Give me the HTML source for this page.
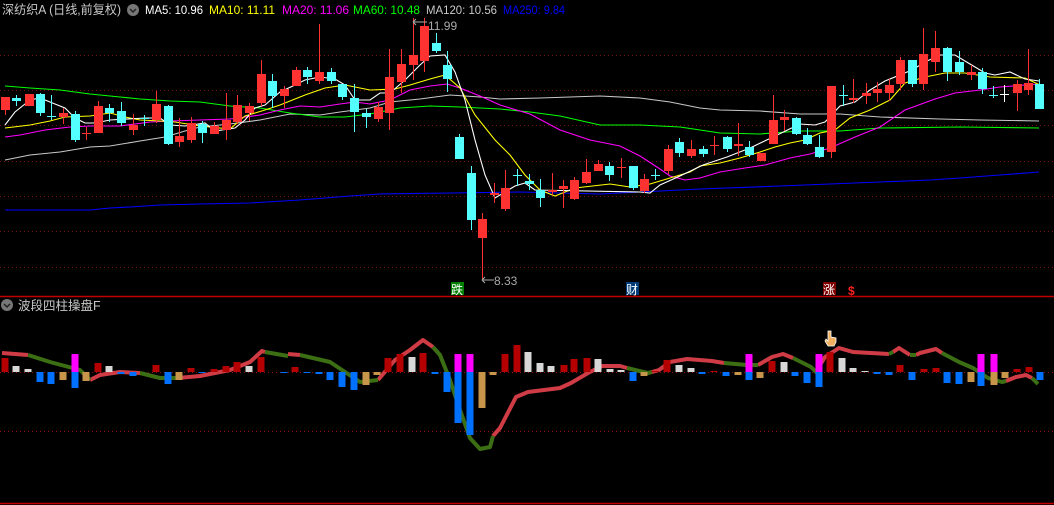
<!DOCTYPE html>
<html><head><meta charset="utf-8">
<style>
html,body{margin:0;padding:0;background:#000;width:1054px;height:505px;overflow:hidden}
svg{display:block}
text{font-family:"Liberation Sans","Noto Sans CJK SC",sans-serif}
</style></head><body>
<svg id="s" width="1054" height="505" viewBox="0 0 1054 505" xmlns="http://www.w3.org/2000/svg">
<rect width="1054" height="505" fill="#000"/>
<g id="grid"></g>
<g id="ma" fill="none" stroke-width="1.1"></g>
<g id="cd"></g>
<g id="band" fill="none" stroke-width="4" stroke-linejoin="round"></g>
<g id="bars"></g>
<line x1="0" y1="296.5" x2="1054" y2="296.5" stroke="#c00000" stroke-width="1.5"/>
<line x1="0" y1="503.5" x2="1054" y2="503.5" stroke="#c00000" stroke-width="1.5"/>
<text x="2" y="14" font-size="12.5" fill="#c8c8c8" textLength="119" lengthAdjust="spacingAndGlyphs">深纺织A (日线,前复权)</text>
<circle cx="133" cy="10" r="6" fill="#777"/><path d="M130 9 l3 3 l3 -3" stroke="#222" stroke-width="1.5" fill="none"/>
<text x="145" y="14" font-size="12" fill="#fff" textLength="58" lengthAdjust="spacingAndGlyphs">MA5: 10.96</text>
<text x="209" y="14" font-size="12" fill="#ffff00" textLength="66" lengthAdjust="spacingAndGlyphs">MA10: 11.11</text>
<text x="282" y="14" font-size="12" fill="#ff00ff" textLength="67" lengthAdjust="spacingAndGlyphs">MA20: 11.06</text>
<text x="353" y="14" font-size="12" fill="#00ff00" textLength="67" lengthAdjust="spacingAndGlyphs">MA60: 10.48</text>
<text x="426" y="14" font-size="12" fill="#c8c8c8" textLength="71" lengthAdjust="spacingAndGlyphs">MA120: 10.56</text>
<text x="503" y="14" font-size="12" fill="#0000ff" textLength="62" lengthAdjust="spacingAndGlyphs">MA250: 9.84</text>
<path d="M413 22 h14 M413 22 l3 -3 M413 22 l3 3" stroke="#aaa" fill="none"/>
<text x="428" y="30" font-size="12" fill="#aaa">11.99</text>
<path d="M482 280 h12 M482 280 l3 -3 M482 280 l3 3" stroke="#aaa" fill="none"/>
<text x="494" y="285" font-size="12" fill="#aaa">8.33</text>
<rect x="451" y="282" width="13" height="13" fill="#008000"/><text x="451" y="294" font-size="12" fill="#fff">跌</text>
<rect x="626" y="282" width="13" height="13" fill="#003c78"/><text x="626" y="294" font-size="12" fill="#fff">财</text>
<rect x="823" y="282" width="13" height="13" fill="#800000"/><text x="823" y="294" font-size="12" fill="#fff">涨</text>
<text x="848" y="295" font-size="12" fill="#ff2020" font-weight="bold">$</text>
<circle cx="7" cy="305" r="6" fill="#777"/><path d="M4 304 l3 3 l3 -3" stroke="#222" stroke-width="1.5" fill="none"/>
<text x="18" y="310" font-size="12.5" fill="#c8c8c8">波段四柱操盘F</text>
<path d="M828 331 v10 l-2 -2 l-1 2 l3 5 h6 l2 -4 v-4 l-5 -1 v-6 z" fill="#f0b060" stroke="#fff" stroke-width="0.8"/>
</svg>
<script>
var NS="http://www.w3.org/2000/svg";
function el(p,t,a){var e=document.createElementNS(NS,t);for(var k in a)e.setAttribute(k,a[k]);document.getElementById(p).appendChild(e);return e;}
[55,90,125,161,196,231,267].forEach(function(y){el("grid","line",{x1:0,x2:1054,y1:y+.5,y2:y+.5,stroke:"#7a1010","stroke-dasharray":"1 3"});});
[372,431].forEach(function(y){el("grid","line",{x1:0,x2:1054,y1:y+.5,y2:y+.5,stroke:"#901010","stroke-dasharray":"1 3"});});
function pl(id,c,pts){el(id,"polyline",{points:pts.map(function(p){return p.join(",")}).join(" "),stroke:c});}
pl("ma","#0000ff",[[5,210],[90,210],[110,208],[130,207],[160,205],[200,204],[250,203],[300,200],[350,196],[380,194],[450,193],[520,192],[560,193],[600,194],[640,192],[700,189],[780,186],[830,184],[880,182],[930,180],[960,178],[1000,175],[1039,172]]);
pl("ma","#c8c8c8",[[5,160],[30,155],[60,152],[90,147],[110,146],[140,141],[165,137],[185,131],[200,127],[230,124],[260,120],[290,114],[320,115],[340,112],[370,108],[390,102],[420,99],[450,95],[480,97],[500,99],[540,98],[600,96],[640,98],[670,102],[700,108],[720,110],[760,111],[800,114],[840,114],[880,117],[940,119],[980,120],[1039,121]]);
pl("ma","#00ff00",[[5,86],[30,88],[60,90],[90,94],[120,97],[140,99],[170,101],[200,102],[230,106],[260,108],[290,113],[320,117],[345,117],[370,114],[400,108],[430,106],[460,107],[500,109],[530,112],[560,116],[600,125],[640,125],[680,127],[720,133],[760,134],[800,131],[840,131],[880,128],[960,127],[1039,128]]);
pl("ma","#ff00ff",[[5,137],[20,135],[45,130],[70,127],[90,126],[120,126],[150,122],[170,121],[200,120],[230,119],[260,115],[280,110],[300,106],[320,107],[340,104],[355,102],[370,104],[390,100],[410,90],[430,86],[447,84],[460,88],[480,96],[500,105],[530,114],[560,130],[590,140],[620,146],[640,156],[660,169],[670,176],[685,180],[700,178],[720,172],[745,168],[765,165],[790,158],[810,154],[830,148],[855,137],[880,127],[905,110],[935,99],[955,93],[980,90],[1000,87],[1038,84]]);
pl("ma","#ffff00",[[5,128],[30,125],[50,121],[65,117],[90,116],[110,113],[125,117],[140,120],[160,121],[175,122],[200,126],[230,129],[245,116],[255,113],[265,110],[280,105],[290,101],[305,95],[325,88],[345,85],[370,90],[395,89],[410,85],[430,79],[445,75],[460,88],[475,115],[495,140],[510,155],[525,175],[540,190],[555,196],[575,188],[610,184],[630,187],[650,184],[670,178],[690,172],[700,166],[720,163],[740,158],[760,152],[775,147],[790,143],[805,140],[820,133],[835,130],[850,118],[870,110],[890,100],[905,83],[925,77],[945,73],[965,73],[990,77],[1025,78],[1040,85]]);
pl("ma","#ffffff",[[5,125],[15,112],[30,100],[40,98],[55,104],[65,108],[75,118],[85,123],[95,123],[110,120],[145,118],[160,118],[170,125],[185,126],[205,123],[215,131],[235,128],[245,120],[255,108],[265,105],[280,92],[295,85],[305,80],[320,77],[335,79],[345,85],[355,100],[370,100],[380,93],[390,93],[405,80],[420,65],[430,56],[445,55],[455,72],[465,100],[475,140],[485,175],[495,198],[505,192],[515,186],[525,183],[535,190],[640,192],[650,193],[660,185],[680,176],[703,165],[727,157],[750,148],[773,137],[800,124],[815,125],[825,122],[840,106],[855,102],[870,90],[885,81],[912,70],[925,62],[940,55],[955,55],[970,64],[985,73],[995,75],[1010,72],[1025,79],[1039,81]]);
var C=[[5,97,110,97,115,"r"],[16,98,101,95,106,"c"],[29,94,106,94,106,"r"],[40,94,113,93,116,"c"],[51,116,117,95,120,"c"],[63,113,117,108,124,"r"],[75,114,140,111,142,"c"],[86,133,134,127,140,"r"],[98,106,133,101,133,"r"],[109,108,113,104,122,"c"],[121,111,123,102,126,"c"],[133,125,130,114,135,"r"],[144,118,119,115,126,"c"],[156,104,120,91,123,"r"],[168,106,144,105,145,"c"],[179,136,142,118,147,"r"],[191,123,140,117,143,"r"],[202,124,133,121,143,"c"],[214,126,134,122,134,"r"],[226,120,130,93,140,"r"],[237,105,122,95,124,"r"],[249,106,113,103,121,"r"],[261,74,103,60,106,"r"],[272,81,96,74,108,"c"],[284,89,96,86,108,"r"],[296,70,86,67,86,"r"],[307,70,77,67,84,"c"],[319,72,81,24,84,"r"],[331,72,81,68,84,"c"],[342,84,97,84,100,"c"],[354,98,112,84,132,"c"],[366,113,117,109,128,"c"],[378,107,119,102,122,"r"],[389,77,113,49,130,"r"],[401,64,82,49,93,"r"],[413,55,65,18,80,"r"],[424,26,61,18,72,"r"],[436,43,51,33,53,"c"],[447,65,79,51,92,"c"],[459,137,159,134,159,"c"],[471,173,220,166,230,"c"],[482,219,238,213,279,"r"],[494,193,195,183,203,"r"],[505,188,209,170,211,"r"],[517,175,176,169,186,"c"],[529,181,184,174,190,"c"],[540,190,198,179,207,"c"],[552,190,192,173,195,"r"],[563,186,189,180,208,"r"],[574,180,199,177,200,"r"],[586,172,183,159,184,"r"],[598,164,171,160,171,"r"],[609,166,175,162,181,"c"],[621,167,168,158,178,"r"],[633,166,188,166,190,"c"],[644,179,191,174,193,"r"],[655,175,176,169,180,"c"],[668,149,171,145,174,"r"],[679,142,153,138,157,"c"],[691,149,156,140,158,"r"],[703,149,154,146,157,"c"],[714,145,146,136,155,"r"],[727,137,149,136,152,"c"],[738,144,146,123,156,"r"],[749,147,155,141,157,"c"],[761,153,161,153,161,"r"],[773,120,144,95,144,"r"],[784,117,120,110,131,"r"],[796,118,134,117,135,"c"],[807,135,144,128,145,"c"],[819,147,157,135,158,"c"],[831,86,152,86,158,"r"],[843,95,96,85,106,"c"],[853,98,100,79,103,"r"],[866,93,96,83,104,"r"],[877,89,93,82,102,"r"],[889,85,93,79,101,"r"],[900,60,84,57,90,"r"],[912,60,84,60,87,"c"],[923,54,84,28,90,"r"],[935,48,62,31,72,"r"],[947,48,72,47,81,"c"],[959,62,72,51,75,"c"],[971,72,75,65,80,"r"],[982,72,89,68,94,"c"],[993,95,96,86,98,"c"],[1004,94,95,85,102,"w"],[1017,84,93,80,111,"r"],[1028,83,90,49,95,"r"],[1039,84,109,79,109,"c"]];
var col={r:"#ff3232",c:"#54ffff",w:"#ffffff"};
C.forEach(function(d){var c=col[d[5]];
el("cd","line",{x1:d[0]+.5,x2:d[0]+.5,y1:d[3],y2:d[4],stroke:c});
var h=Math.max(1,d[2]-d[1]);el("cd","rect",{x:d[0]-4,y:d[1],width:9,height:h,fill:c});});
var red=[[[2,353],[28,355]],[[90,380],[100,375],[120,372],[140,373]],[[178,378],[200,376],[230,370],[250,362],[262,351],[265,352]],[[288,354],[300,355]],[[378,380],[395,360],[410,350],[423,340],[433,347]],[[493,436],[500,428],[516,397],[528,392],[560,388],[571,383],[588,373],[602,366],[620,366],[627,368]],[[652,372],[659,370],[670,362],[687,359],[712,361],[724,363]],[[758,365],[772,357],[783,354],[793,358]],[[820,365],[825,357],[839,348],[853,352],[871,353],[889,354]],[[893,352],[899,348],[910,355]],[[916,355],[920,353],[936,349],[942,353]],[[1006,381],[1016,377],[1026,375],[1032,378]]];
var grn=[[[28,355],[50,362],[80,370],[90,380]],[[140,373],[160,378],[178,378]],[[265,352],[288,356]],[[300,355],[330,362],[345,372],[360,382],[378,380]],[[433,347],[440,355],[450,380],[460,410],[470,438],[480,449],[490,447],[493,436]],[[627,368],[648,373],[652,372]],[[724,363],[747,365],[758,365]],[[793,358],[811,367],[818,374],[820,365]],[[889,354],[893,352]],[[910,355],[916,355]],[[942,353],[959,362],[973,368],[988,378],[1002,382],[1006,381]],[[1032,378],[1038,384]]];
red.forEach(function(p){pl("band","#d03c46",p);});
grn.forEach(function(p){pl("band","#3c6e14",p);});
var B=[[5,"R",358],[16,"W",366],[28,"W",369],[40,"B",382],[51,"B",384],[63,"O",380],[75,"M",354,388,"B"],[86,"O",381],[98,"R",363],[109,"W",366],[121,"B",374],[133,"B",376],[156,"R",365],[168,"B",384],[179,"O",380],[191,"R",368],[202,"B",373],[214,"R",369],[226,"R",366],[237,"R",362],[249,"W",366],[261,"R",357],[284,"B",373],[295,"R",367],[307,"B",373],[319,"B",374],[330,"B",380],[342,"B",387],[354,"B",390],[366,"O",385],[377,"O",375],[388,"R",358],[400,"R",354],[412,"W",357],[423,"R",353],[435,"B",374],[447,"B",392],[458,"M",354,423,"B"],[470,"M",354,435,"B"],[482,"O",408],[493,"O",375],[505,"R",354],[517,"R",345],[528,"W",352],[540,"W",363],[551,"W",366],[564,"R",365],[574,"R",359],[587,"R",358],[598,"W",359],[610,"W",369],[621,"W",370],[633,"B",381],[644,"O",376],[655,"R",371],[667,"R",360],[679,"W",365],[691,"W",368],[702,"B",374],[714,"R",371],[726,"B",376],[738,"O",375],[749,"M",354,380,"B"],[760,"O",378],[772,"R",361],[784,"W",362],[795,"B",376],[807,"B",383],[819,"M",354,387,"B"],[830,"R",352],[842,"W",358],[853,"W",368],[865,"W",371],[877,"B",374],[889,"B",375],[900,"R",365],[912,"B",380],[924,"R",369],[936,"R",368],[947,"B",383],[959,"B",384],[971,"O",382],[981,"M",354,386,"B"],[994,"M",354,385,"O"],[1005,"O",378],[1017,"R",369],[1029,"R",367],[1040,"B",380]];
var bc={R:"#b40000",W:"#d8d8d8",B:"#0070ff",O:"#c8964b",M:"#ff00ff"};
function bar(x,y1,y2,t){el("bars","rect",{x:x-3.5,y:Math.min(y1,y2),width:7,height:Math.max(1,Math.abs(y2-y1)),fill:bc[t]});}
B.forEach(function(d){var x=d[0],t=d[1],y=d[2];
if(t=="M"){bar(x,354,372,"M");bar(x,372,d[3],d[4]);}
else if(t=="R"||t=="W")bar(x,y,372,t);else bar(x,372,y,t);});
</script>
</body></html>
